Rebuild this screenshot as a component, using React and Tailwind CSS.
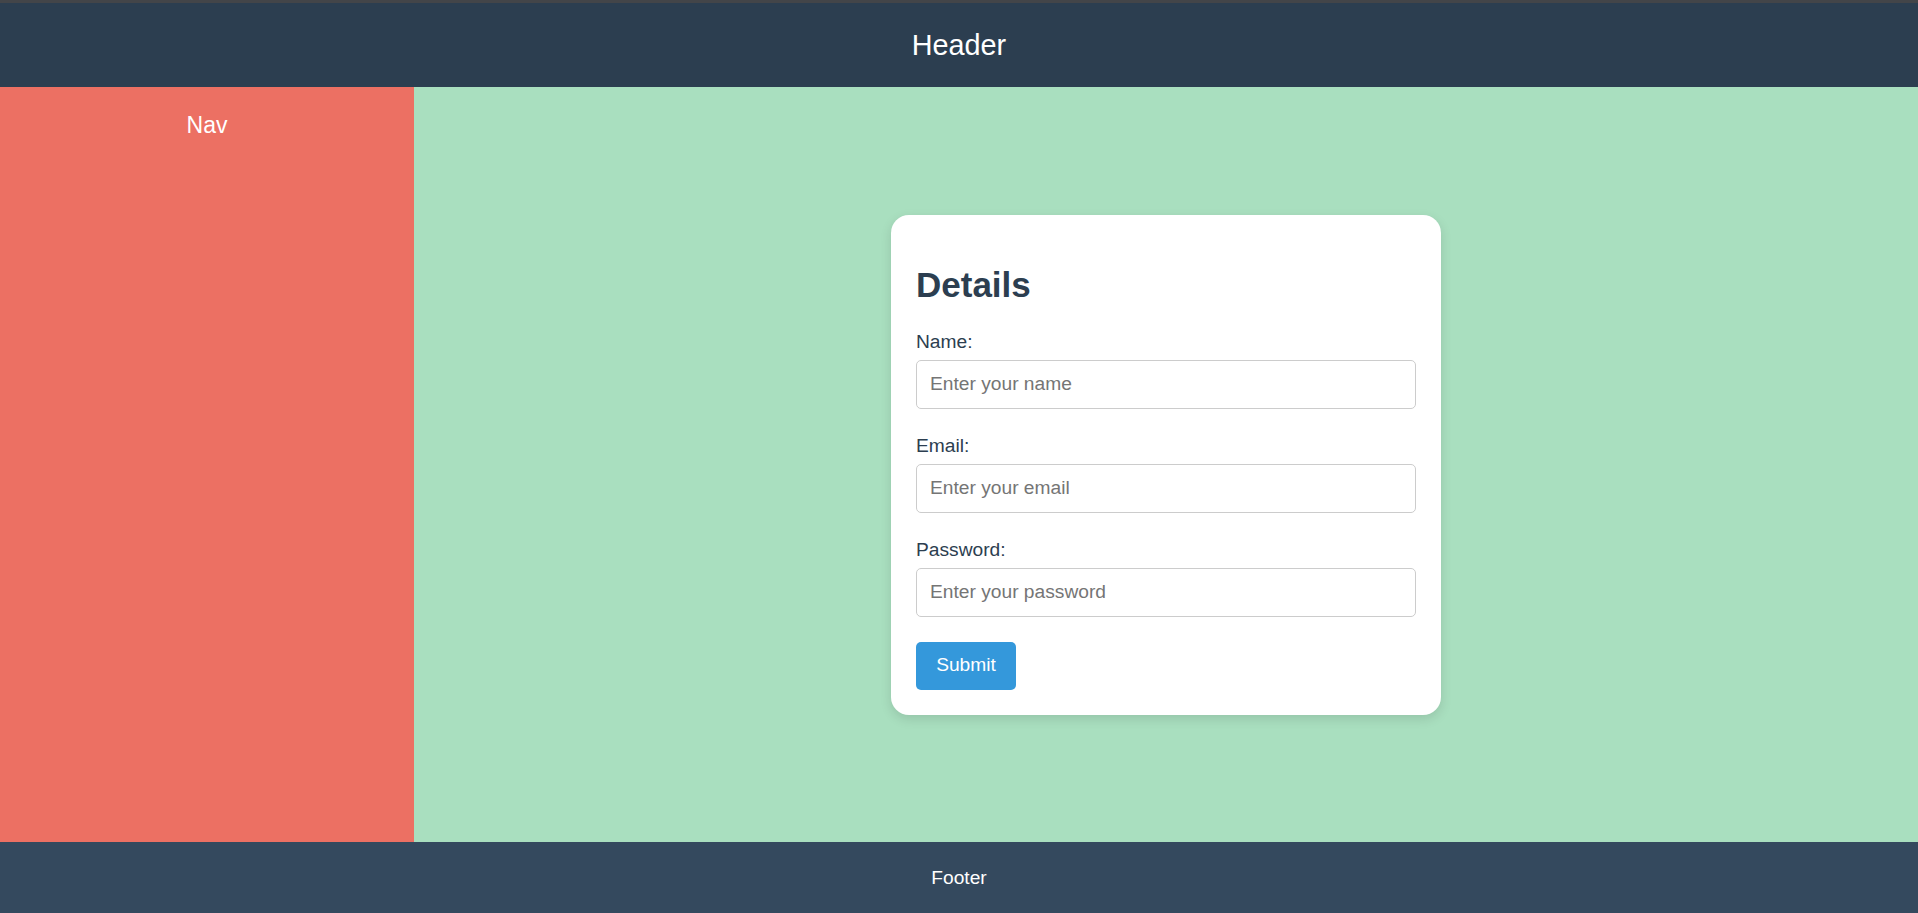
import React from 'react';

const fields = [
  { id: 'name', label: 'Name:', type: 'text', placeholder: 'Enter your name' },
  { id: 'email', label: 'Email:', type: 'email', placeholder: 'Enter your email' },
  { id: 'password', label: 'Password:', type: 'password', placeholder: 'Enter your password' },
];

const App = () => {
  return (
    <div className="flex flex-col h-screen font-['Liberation_Sans',Arial,sans-serif]">
      {/* Header */}
      <header className="h-[87px] shrink-0 border-t-[3px] border-[#434549] bg-[#2c3e50] flex items-center justify-center">
        <h1 className="text-white text-[28.8px] leading-none font-normal">Header</h1>
      </header>

      <div className="flex flex-1 min-h-0">
        {/* Nav */}
        <nav className="w-[414px] shrink-0 bg-[#ec7063] pt-[25px] text-center">
          <p className="text-white text-[23px] leading-[27px]">Nav</p>
        </nav>

        {/* Main */}
        <main className="flex-1 bg-[#a9dfbf] flex items-center justify-center">
          <div className="w-[550px] bg-white rounded-[18px] p-[25px] shadow-[0_4px_12px_rgba(0,0,0,0.12)]">
            <h2 className="mt-[25px] text-[35px] leading-[40px] font-bold text-[#2c3e50]">Details</h2>
            <form onSubmit={(e) => e.preventDefault()}>
              {fields.map((f) => (
                <div key={f.id} className="mt-[26px]">
                  <label htmlFor={f.id} className="block mb-[7px] text-[19.2px] leading-[22px] text-[#2c3e50]">
                    {f.label}
                  </label>
                  <input
                    id={f.id}
                    type={f.type}
                    placeholder={f.placeholder}
                    className="block w-full h-[49px] px-[13px] border border-[#cccccc] rounded-[5px] text-[19.2px] text-[#333] placeholder:text-[#757575] outline-none"
                  />
                </div>
              ))}
              <button
                type="submit"
                className="mt-[25px] w-[100px] h-[48px] bg-[#3498db] text-white text-[19.2px] rounded-[5px] flex items-center justify-center"
              >
                Submit
              </button>
            </form>
          </div>
        </main>
      </div>

      {/* Footer */}
      <footer className="h-[71px] shrink-0 bg-[#34495e] flex items-center justify-center">
        <p className="text-white text-[19.2px] leading-none">Footer</p>
      </footer>
    </div>
  );
};

export default App;
